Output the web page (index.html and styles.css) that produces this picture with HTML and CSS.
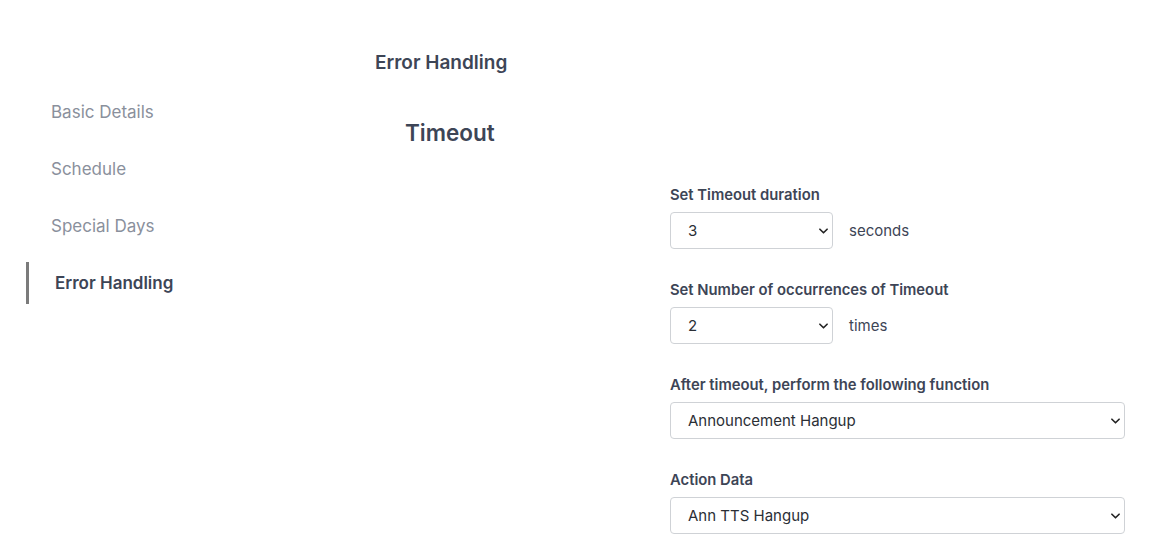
FILE: index.html
```html
<!DOCTYPE html>
<html lang="en">
<head>
<meta charset="utf-8">
<title>Error Handling</title>
<link rel="stylesheet" href="styles.css">
</head>
<body>
<div class="page">
  <nav class="sidebar">
    <a class="nav-item">Basic Details</a>
    <a class="nav-item">Schedule</a>
    <a class="nav-item">Special Days</a>
    <a class="nav-item active">Error Handling</a>
  </nav>
  <main class="main">
    <h1 class="page-title">Error Handling</h1>
    <h2 class="section-title">Timeout</h2>
    <form class="form">
      <div class="field">
        <label class="label">Set Timeout duration</label>
        <div class="row">
          <div class="select small">
            <span class="value">3</span>
            <svg class="chev" viewBox="0 0 10 6" width="9" height="6"><path d="M1 1l4 4 4-4" fill="none" stroke="#222" stroke-width="1.8" stroke-linecap="round" stroke-linejoin="round"/></svg>
          </div>
          <span class="unit">seconds</span>
        </div>
      </div>
      <div class="field">
        <label class="label">Set Number of occurrences of Timeout</label>
        <div class="row">
          <div class="select small">
            <span class="value">2</span>
            <svg class="chev" viewBox="0 0 10 6" width="9" height="6"><path d="M1 1l4 4 4-4" fill="none" stroke="#222" stroke-width="1.8" stroke-linecap="round" stroke-linejoin="round"/></svg>
          </div>
          <span class="unit">times</span>
        </div>
      </div>
      <div class="field">
        <label class="label">After timeout, perform the following function</label>
        <div class="select wide">
          <span class="value">Announcement Hangup</span>
          <svg class="chev" viewBox="0 0 10 6" width="9" height="6"><path d="M1 1l4 4 4-4" fill="none" stroke="#222" stroke-width="1.8" stroke-linecap="round" stroke-linejoin="round"/></svg>
        </div>
      </div>
      <div class="field">
        <label class="label">Action Data</label>
        <div class="select wide">
          <span class="value">Ann TTS Hangup</span>
          <svg class="chev" viewBox="0 0 10 6" width="9" height="6"><path d="M1 1l4 4 4-4" fill="none" stroke="#222" stroke-width="1.8" stroke-linecap="round" stroke-linejoin="round"/></svg>
        </div>
      </div>
    </form>
  </main>
</div>
</body>
</html>
```
FILE: styles.css
```css
* { box-sizing: border-box; }
html, body { margin: 0; padding: 0; background: #fff; }
body {
  font-family: Inter, "Noto Sans", sans-serif;
  color: #3d4556;
  width: 1171px;
  height: 550px;
  overflow: hidden;
}
.page {
  display: flex;
  align-items: flex-start;
}
.sidebar {
  width: 375px;
  flex-shrink: 0;
  padding-top: 91px;
  padding-left: 26px;
  display: flex;
  flex-direction: column;
  gap: 15px;
}
.nav-item {
  display: flex;
  align-items: center;
  height: 42px;
  padding-left: 25px;
  font-size: 17px;
  color: #8a909c;
  cursor: pointer;
}
.nav-item.active {
  border-left: 3px solid #7b7b7b;
  padding-left: 26px;
  font-weight: 600;
  color: #3d4556;
}
.main {
  flex: 1;
  padding-top: 51px;
}
.page-title {
  margin: 0;
  font-size: 19px;
  line-height: 24px;
  font-weight: 600;
  color: #3d4556;
}
.section-title {
  margin: 44px 0 0 30px;
  font-size: 22.5px;
  line-height: 28px;
  font-weight: 600;
  color: #3d4556;
}
.form {
  margin: 38px 0 0 295px;
  width: 455px;
  display: flex;
  flex-direction: column;
  gap: 31px;
}
.field {
  display: flex;
  flex-direction: column;
  gap: 7px;
}
.label {
  font-size: 14.8px;
  line-height: 20px;
  font-weight: 600;
  color: #3d4556;
}
.row {
  display: flex;
  align-items: center;
  gap: 16px;
}
.select {
  position: relative;
  display: flex;
  align-items: center;
  height: 37px;
  padding: 0 17px;
  border: 1px solid #cfd2d6;
  border-radius: 4px;
  background: #fff;
  font-size: 15px;
  color: #2b2f36;
}
.select.small { width: 163px; }
.select.wide { width: 455px; }
.chev {
  position: absolute;
  right: 4px;
  top: 15px;
}
.unit {
  font-size: 15px;
  color: #3d4556;
}
```
